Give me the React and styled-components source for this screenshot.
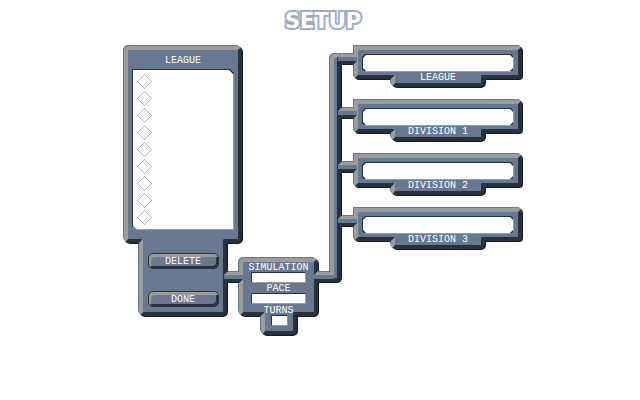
import React from "react";
import styled, { createGlobalStyle, css } from "styled-components";

const steel = "#687890";
const edge = "#60789a";
const light = "#9c9c9c";
const dark = "#28323c";
const black = "#151a22";

const GlobalStyle = createGlobalStyle`
  * { box-sizing: border-box; }
  body {
    margin: 0;
    background: #fff;
    font-family: "Liberation Mono", monospace;
    font-size: 10px;
    line-height: 12px;
  }
`;

const Page = styled.div`
  padding-left: 6px;
`;

const Title = styled.h1`
  margin: 0;
  padding-top: 10px;
  height: 45px;
  text-align: center;
  font: bold 21px/22px "DejaVu Sans", sans-serif;
  color: #fff;
  -webkit-text-stroke: 4px #a0acc0;
  paint-order: stroke fill;
`;

const Board = styled.main`
  display: flex;
  align-items: flex-start;
  width: 100%;
  max-width: 400px;
  margin: 0 auto;
`;

const raised = css`
  border: 4px solid;
  border-color: ${light} ${dark} ${dark} ${light};
  background: ${steel};
  box-shadow: -1px -1px 0 ${edge}, 1px 1px 0 ${black};
`;

const Plate = styled.div`
  ${raised}
  display: flex;
  flex-direction: column;
  margin: 1px;
  padding: ${(p) => p.$pad || "0"};
  border-radius: ${(p) => (p.$square ? "0 4px 4px 4px" : "5px")};
`;

const Tab = styled.div`
  ${raised}
  position: relative;
  z-index: 1;
  display: flex;
  flex-direction: column;
  align-items: center;
  gap: 22px;
  margin: -5px ${(p) => p.$right}px 1px ${(p) => p.$left}px;
  padding: ${(p) => p.$pad};
  border-top: 0;
  border-radius: 0 0 5px 5px;
  clip-path: polygon(
    4px 0, calc(100% - 4px) 0, calc(100% + 1px) 5px,
    calc(100% + 1px) calc(100% + 1px), -1px calc(100% + 1px), -1px 5px
  );
`;

const Console = styled.section`
  flex: 0 0 120px;
`;

const Heading = styled.h2`
  margin: 0 0 4px;
  height: 10px;
  font-size: 10px;
  line-height: 12px;
  font-weight: normal;
  text-align: center;
  color: #fff;
`;

const ListFrame = styled.div`
  padding: 1px;
  background:
    linear-gradient(${dark}, ${dark}) 0 0 / 100% 1px no-repeat,
    linear-gradient(${dark}, ${dark}) 0 0 / 1px 100% no-repeat,
    linear-gradient(${dark}, ${dark}) 100% 0 / 5px 5px no-repeat,
    ${light};
  clip-path: polygon(0 0, calc(100% - 4px) 0, 100% 4px, 100% 100%, 4px 100%, 0 calc(100% - 4px));
`;

const List = styled.div`
  display: flex;
  flex-direction: column;
  gap: 2px;
  padding: 4px;
  background: #fff;
  clip-path: polygon(0 0, calc(100% - 4px) 0, 100% 4px, 100% 100%, 4px 100%, 0 calc(100% - 4px));
`;

const Choice = styled.label`
  display: grid;
  width: 15px;
  height: 15px;
  & > * { grid-area: 1 / 1; }
`;

const Radio = styled.input`
  width: 15px;
  height: 15px;
  margin: 0;
  opacity: 0;
`;

const Button = styled.button`
  width: 71px;
  height: 16px;
  padding: 2px 0 0;
  border: 1px solid ${dark};
  border-radius: 5px;
  background: ${steel};
  box-shadow: inset 2px 3px 0 ${light}, inset -2px -2px 0 ${dark};
  color: #fff;
  font: inherit;
`;

const Settings = styled.section`
  flex: 0 0 81px;
  margin-top: 212px;
`;

const FieldLabel = styled.label`
  height: 10px;
  color: #fff;
  text-align: center;
  white-space: nowrap;
`;

const OverlapLabel = styled(FieldLabel)`
  position: relative;
  z-index: 2;
  margin: ${(p) => p.$gap || 0}px 0 ${(p) => p.$overlap}px;
`;

const Entry = styled.input`
  width: ${(p) => p.$width}px;
  height: 11px;
  margin: 0;
  align-self: center;
  padding: 0 2px;
  border: 1px solid;
  border-color: ${dark} ${light} ${light} ${dark};
  border-radius: 0;
  background: #fff;
  font: inherit;
`;

const octagon = css`
  clip-path: polygon(
    3px 0, calc(100% - 3px) 0, 100% 3px, 100% calc(100% - 3px),
    calc(100% - 3px) 100%, 3px 100%, 0 calc(100% - 3px), 0 3px
  );
`;

const NameFrame = styled.div`
  height: 18px;
  border: 1px solid;
  border-color: ${dark} ${light} ${light} ${dark};
  background: ${dark};
  ${octagon}
`;

const NameInput = styled.input`
  display: block;
  width: 100%;
  height: 16px;
  margin: 0;
  padding: 0 6px;
  border: 0;
  background: #fff;
  font: inherit;
  ${octagon}
`;

const Conduit = styled.div`
  position: relative;
  z-index: 3;
  flex: 0 0 ${(p) => p.$length}px;
  height: 12px;
  margin: ${(p) => p.$margin};
  background: linear-gradient(
    ${edge} 1px, ${light} 1px 4px, ${steel} 4px 8px, ${dark} 8px 11px, ${black} 11px
  );
  clip-path: polygon(
    4px 0, calc(100% - 4px) 0, 100% 4px, 100% 8px,
    calc(100% - 4px) 100%, 4px 100%, 0 8px, 0 4px
  );
`;

const Riser = styled.div`
  ${raised}
  flex: 0 0 11px;
  height: 228px;
  margin: 9px 1px 0;
  border-radius: 5px 0 5px 0;
  box-shadow: -1px -1px 0 ${edge}, 0 -1px 0 ${edge}, 1px 1px 0 ${black}, 0 1px 0 ${black};
`;

const Divisions = styled.section`
  flex: 1;
  display: flex;
  flex-direction: column;
  gap: 11px;
  min-width: 0;
  margin-left: -4px;
`;

const DivisionRow = styled.div`
  display: flex;
  align-items: flex-start;
`;

const DivisionPanel = styled.div`
  flex: 1;
  min-width: 0;
`;

const TabFill = styled.div`
  height: 8px;
`;

const diamondPath = Array.from({ length: 8 }, (_, i) =>
  [[7 - i, i], [7 + i, i], [7 - i, 14 - i], [7 + i, 14 - i]]
    .map(([x, y]) => `M${x} ${y}h1v1h-1z`)
    .join("")
).join("");

function Diamond() {
  return (
    <svg width="15" height="15" viewBox="0 0 15 15" shapeRendering="crispEdges" aria-hidden="true">
      <path d={diamondPath} fill="#b8b8b8" />
    </svg>
  );
}

function Division({ id, name }) {
  return (
    <DivisionRow>
      <Conduit $length={19} $margin="8px -4px 0 0" />
      <DivisionPanel>
        <Plate $pad="4px 4px 0" $square>
          <NameFrame>
            <NameInput id={id} type="text" />
          </NameFrame>
          <OverlapLabel htmlFor={id} $overlap={-7}>{name}</OverlapLabel>
        </Plate>
        <Tab $left={38} $right={38} $pad="0">
          <TabFill />
        </Tab>
      </DivisionPanel>
    </DivisionRow>
  );
}

const slots = [1, 2, 3, 4, 5, 6, 7, 8, 9];
const divisions = ["LEAGUE", "DIVISION 1", "DIVISION 2", "DIVISION 3"];

export default function App() {
  return (
    <Page>
      <GlobalStyle />
      <Title>SETUP</Title>
      <Board>
        <Console>
          <Plate $pad="5px 4px 9px">
            <Heading>LEAGUE</Heading>
            <ListFrame>
              <List role="radiogroup" aria-label="League">
                {slots.map((n) => (
                  <Choice key={n}>
                    <Diamond />
                    <Radio type="radio" name="league" aria-label={`League ${n}`} />
                  </Choice>
                ))}
              </List>
            </ListFrame>
          </Plate>
          <Tab $left={16} $right={16} $pad="14px 0 5px">
            <Button type="button">DELETE</Button>
            <Button type="button">DONE</Button>
          </Tab>
        </Console>
        <Conduit $length={19} $margin="226px -5px 0 -19px" />
        <Settings>
          <Plate>
            <FieldLabel htmlFor="simulation">SIMULATION</FieldLabel>
            <Entry id="simulation" type="text" $width={55} />
            <FieldLabel htmlFor="pace">PACE</FieldLabel>
            <Entry id="pace" type="text" $width={55} />
            <OverlapLabel htmlFor="turns" $gap={1} $overlap={-3}>TURNS</OverlapLabel>
          </Plate>
          <Tab $left={23} $right={22} $pad="3px 0 5px">
            <Entry id="turns" type="text" $width={17} />
          </Tab>
        </Settings>
        <Conduit $length={20} $margin="226px -5px 0 -5px" />
        <Riser />
        <Divisions>
          {divisions.map((name, i) => (
            <Division key={name} id={`division-${i}`} name={name} />
          ))}
        </Divisions>
      </Board>
    </Page>
  );
}
